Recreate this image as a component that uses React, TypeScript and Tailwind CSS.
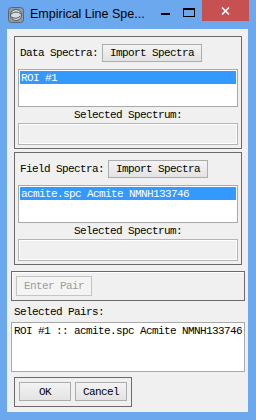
import React from "react";

const mono = "font-['Liberation_Mono',monospace] text-[11px] tracking-[-0.6px] leading-[12px]";

function Btn({ label, className = "", disabled = false }: { label: string; className?: string; disabled?: boolean }) {
  return (
    <div
      className={`flex items-center justify-center border ${
        disabled
          ? "border-[#c4c4c4] bg-[#f4f4f4] text-[#9c9c9c]"
          : "border-[#adadad] bg-gradient-to-b from-[#f3f3f3] to-[#e3e3e3] text-black"
      } ${className}`}
    >
      <span className={mono}>{label}</span>
    </div>
  );
}

function SpectraPanel({ label, item, className = "" }: { label: string; item: string; className?: string }) {
  return (
    <div className={`w-[228px] h-[113px] border border-[#6b6b6b] px-[3px] flex flex-col text-black ${className}`}>
      <div className="mt-[7px] flex items-center h-[18px]">
        <span className={`${mono} pl-[2px] shrink-0`} style={{ width: label.length * 6 + 6 }}>
          {label}
        </span>
        <Btn label="Import Spectra" className="w-[100px] h-[18px]" />
      </div>
      <div className="mt-[7px] h-[38px] w-[220px] border border-[#a8a8a8] bg-white p-px">
        <div className="h-[13px] bg-[#3399ff] flex items-center pl-[1px] text-white">
          <span className={mono}>{item}</span>
        </div>
      </div>
      <div className="h-[16px] flex items-center justify-center w-[220px]">
        <span className={mono}>Selected Spectrum:</span>
      </div>
      <div className="h-[22px] w-[220px] border border-[#b4b4b4] shadow-[inset_1px_1px_0_#ffffff,inset_-1px_-1px_0_#ffffff] bg-[#f0f0f0]" />
    </div>
  );
}

export default function App() {
  return (
    <div className="w-[256px] h-[420px] bg-[#6ba8ee] flex flex-col overflow-hidden">
      <div className="h-[29px] relative flex items-start shrink-0">
        <svg className="ml-[8px] mt-[7px]" width="16" height="16" viewBox="0 0 16 16">
          <rect x="0.5" y="0.5" width="15" height="15" rx="3" fill="#8e9aa6" stroke="#5c6670" />
          <circle cx="8" cy="8" r="5.5" fill="#d9dde2" stroke="#4f5861" />
          <path d="M3 7 Q8 3 13 7" fill="none" stroke="#4f5861" strokeWidth="1" />
          <path d="M3.5 10 Q8 13 12.5 9" fill="none" stroke="#4f5861" strokeWidth="1" />
        </svg>
        <span className="ml-[6px] mt-[6px] font-['Liberation_Sans',sans-serif] text-[12.5px] leading-[16px] text-black">
          Empirical Line Spe...
        </span>
        <div className="absolute left-[161px] top-[13px] w-[9px] h-[2px] bg-black" />
        <div className="absolute left-[183px] top-[8px] w-[12px] h-[9px] border border-black border-t-2" />
        <div className="absolute left-[202px] top-0 w-[47px] h-[21px] bg-[#c75050] flex items-center justify-center">
          <svg width="9" height="8" viewBox="0 0 9 8">
            <path d="M1 0.5 L8 7.5 M8 0.5 L1 7.5" stroke="#ffffff" strokeWidth="1.6" />
          </svg>
        </div>
      </div>
      <div className="ml-[7px] w-[241px] h-[383px] bg-[#f0f0f0] flex flex-col pt-[7px] shrink-0 text-black">
        <SpectraPanel label="Data Spectra:" item="ROI #1" className="ml-[7px]" />
        <SpectraPanel label="Field Spectra:" item="acmite.spc Acmite NMNH133746" className="ml-[7px] mt-[3px]" />
        <div className="ml-[4px] mt-[6px] w-[234px] h-[30px] border border-[#6b6b6b] shadow-[inset_1px_1px_0_#ffffff] flex items-start pl-[4px] pt-[4px]">
          <Btn label="Enter Pair" disabled className="w-[76px] h-[20px]" />
        </div>
        <div className="ml-[7px] h-[21px] flex items-center">
          <span className={mono}>Selected Pairs:</span>
        </div>
        <div className="ml-[4px] w-[234px] h-[50px] border border-[#a8a8a8] bg-white pl-[2px] pt-[2px]">
          <div className={`${mono} whitespace-nowrap`}>ROI #1 :: acmite.spc Acmite NMNH133746</div>
        </div>
        <div className="ml-[7px] mt-[5px] w-[118px] h-[30px] border border-[#6b6b6b] flex items-start gap-[4px] pl-[4px] pt-[4px]">
          <Btn label="OK" className="w-[52px] h-[19px]" />
          <Btn label="Cancel" className="w-[52px] h-[19px]" />
        </div>
      </div>
    </div>
  );
}
